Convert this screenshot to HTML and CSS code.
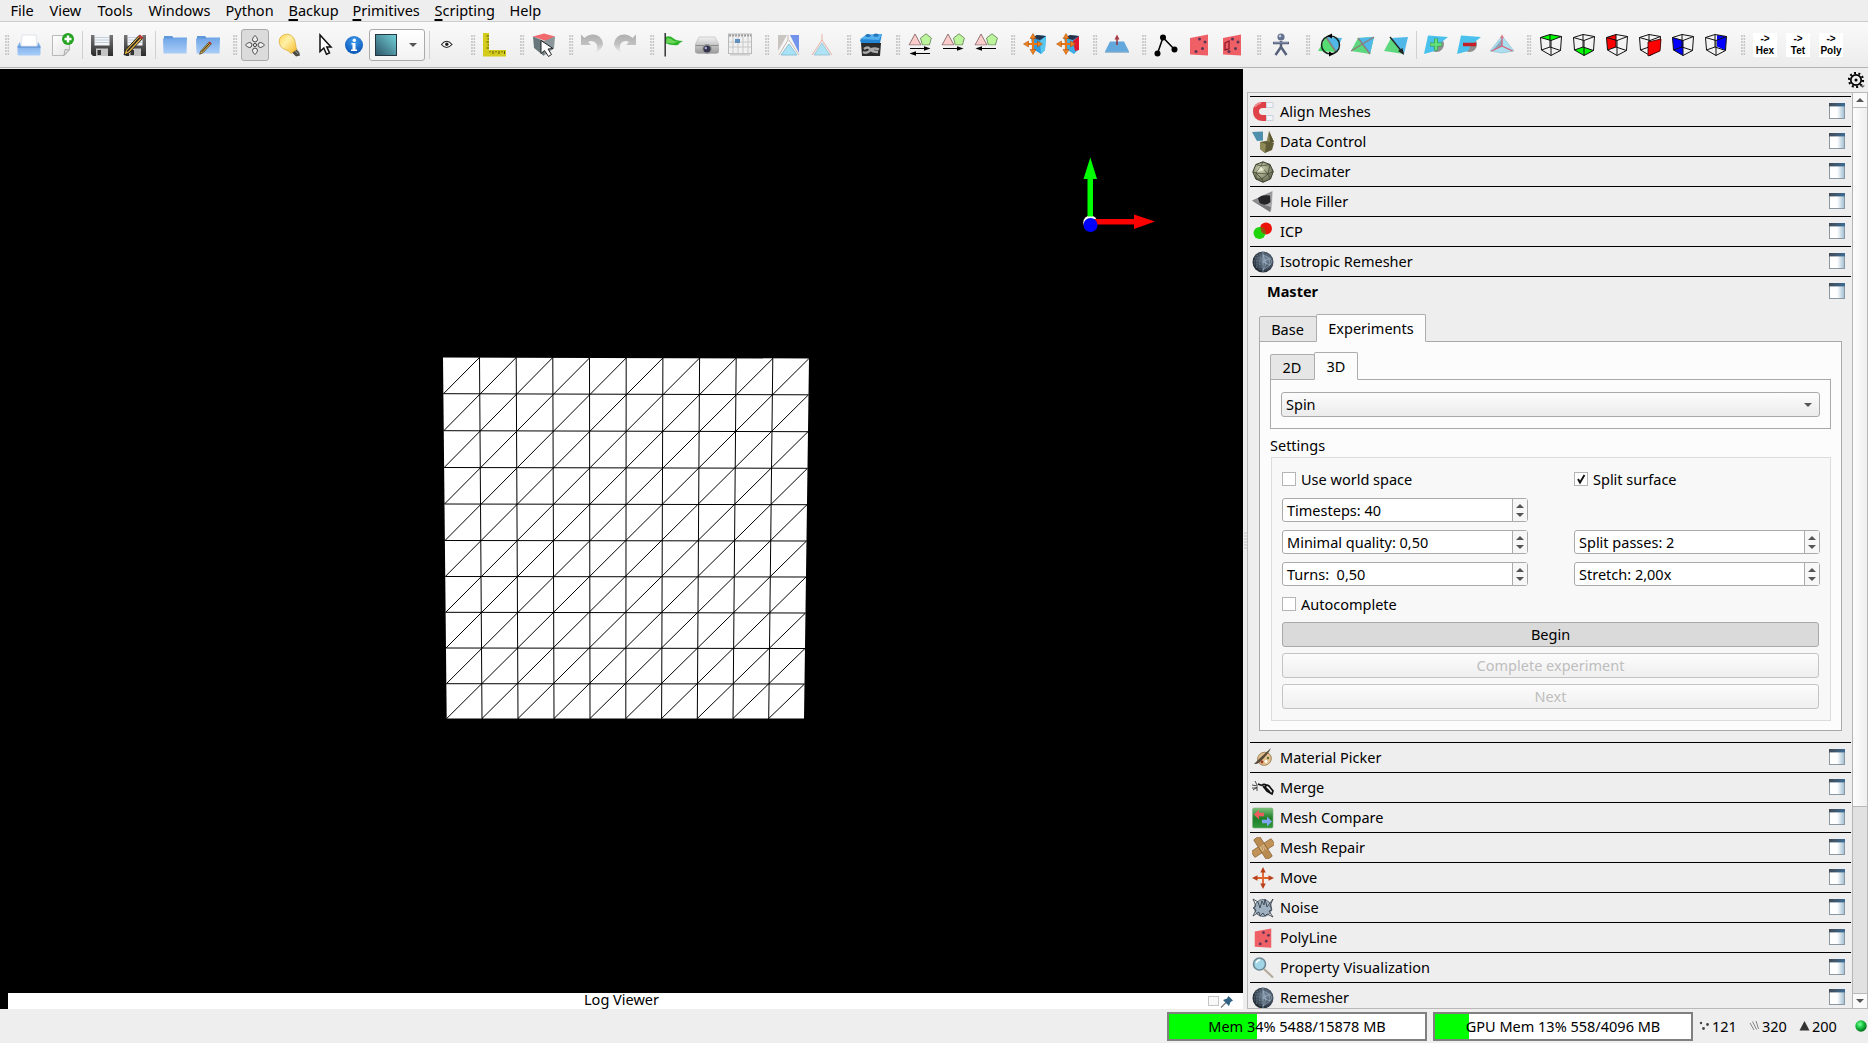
FILE: index.html
```html
<!DOCTYPE html>
<html lang="en">
<head>
<meta charset="utf-8">
<title>Mesh Viewer</title>
<link rel="stylesheet" href="styles.css">
</head>
<body>
<svg class="defs" width="0" height="0" aria-hidden="true">
  <defs>
    <linearGradient id="g-blue" x1="0" y1="0" x2="0" y2="1"><stop offset="0" stop-color="#6fa5e6"/><stop offset="1" stop-color="#a9cdf8"/></linearGradient>
    <linearGradient id="g-paper" x1="0" y1="0" x2="1" y2="1"><stop offset="0" stop-color="#fff"/><stop offset="1" stop-color="#e2e2e2"/></linearGradient>
    <linearGradient id="g-dark" x1="0" y1="0" x2="0" y2="1"><stop offset="0" stop-color="#777"/><stop offset="1" stop-color="#2b2b2b"/></linearGradient>
    <linearGradient id="g-teal" x1="1" y1="0" x2="0" y2="1"><stop offset="0" stop-color="#74d3da"/><stop offset="1" stop-color="#2c5468"/></linearGradient>
    <linearGradient id="g-fade" x1="0" y1="0" x2="0" y2="1"><stop offset="0" stop-color="#b0b0b0"/><stop offset=".5" stop-color="#c0c0c0"/><stop offset="1" stop-color="#f4f4f4"/></linearGradient>
    <linearGradient id="g-bulb" x1="0" y1="0" x2="1" y2="1"><stop offset="0" stop-color="#ffd34e"/><stop offset=".4" stop-color="#fff0a8"/><stop offset="1" stop-color="#f6b821"/></linearGradient>
    <linearGradient id="g-win" x1="0" y1="0" x2="1" y2="0"><stop offset="0" stop-color="#fff"/><stop offset=".5" stop-color="#fff"/><stop offset="1" stop-color="#9fbdd0"/></linearGradient>
    <linearGradient id="g-bar" x1="0" y1="0" x2="1" y2="0"><stop offset="0" stop-color="#414a55"/><stop offset="1" stop-color="#3d6c95"/></linearGradient>
    <radialGradient id="g-ball" cx=".4" cy=".35" r=".65"><stop offset="0" stop-color="#7dff9c"/><stop offset=".5" stop-color="#17c340"/><stop offset="1" stop-color="#04701c"/></radialGradient>
    <radialGradient id="g-globe" cx=".6" cy=".4" r=".65"><stop offset="0" stop-color="#7b90a5"/><stop offset="1" stop-color="#1b232d"/></radialGradient>
    <radialGradient id="g-rock" cx=".4" cy=".35" r=".7"><stop offset="0" stop-color="#d5d9b8"/><stop offset="1" stop-color="#5c6047"/></radialGradient>
    <radialGradient id="g-info" cx=".5" cy=".3" r=".7"><stop offset="0" stop-color="#3f9cf0"/><stop offset="1" stop-color="#0a55b5"/></radialGradient>
    <linearGradient id="g-cam" x1="0" y1="0" x2="0" y2="1"><stop offset="0" stop-color="#f2f2f2"/><stop offset="1" stop-color="#999"/></linearGradient>
    <linearGradient id="g-green" x1="0" y1="0" x2="0" y2="1"><stop offset="0" stop-color="#7cc47a"/><stop offset=".5" stop-color="#1f7d2b"/><stop offset="1" stop-color="#2f9a3a"/></linearGradient>
    <linearGradient id="g-hole" x1="0" y1="0" x2="1" y2="1"><stop offset="0" stop-color="#77777a"/><stop offset="1" stop-color="#b9b9bc"/></linearGradient>
  </defs>
  <symbol id="i-window" viewBox="0 0 16 16"><rect x=".5" y=".5" width="15" height="15" fill="url(#g-win)" stroke="#8b98a2"/><rect width="16" height="3.400" fill="url(#g-bar)"/></symbol>
  <symbol id="i-folder" viewBox="0 0 24 24"><path d="M1 3h8l2 2h12v10H1z" fill="#5f97dd"/><path d="M0 5.500h10l1.500-1H24L23.500 20.500H.5z" fill="url(#g-blue)"/></symbol>
  <symbol id="i-pencil" viewBox="0 0 24 24"><path d="M1 22l1.500-5L16 2.500l3.500 3L6 20z" fill="#e8b640" stroke="#222" stroke-width="1"/><path d="M4 18.500L17.500 4" stroke="#222" stroke-width="1.600"/><path d="M15 3.500L17 1.500l3.500 3-2 2z" fill="#b23a32"/></symbol>
  <symbol id="i-floppy" viewBox="0 0 24 24"><path d="M1 2h22v21H3L1 21z" fill="url(#g-dark)"/><path d="M4.500 1.500h15v11h-15z" fill="#f3f5f8"/><path d="M5 4.500h14M5 7h14M5 9.500h14" stroke="#b8c4d0" stroke-width=".8"/><path d="M6 15.500h12V23H6z" fill="#c4c4c4"/><path d="M7.500 17h3.500v5H7.500z" fill="#333"/></symbol>
  <symbol id="i-shapes" viewBox="0 0 24 12.500"><path d="M1 12L7 1l6 11z" fill="#fbcccc" stroke="#7a5c5c" stroke-width=".8"/><path d="M12.500 5L18 .8 23.400 5l-2 7h-7z" fill="#bdf59c" stroke="#5e7c52" stroke-width=".8"/></symbol>
  <symbol id="i-arr-r" viewBox="0 0 24 6"><path d="M2 3h16" stroke="#000" stroke-width="1.200"/><path d="M16 .8L22.500 3 16 5.200z"/></symbol>
  <symbol id="i-arr-l" viewBox="0 0 24 6"><path d="M22 3H6" stroke="#000" stroke-width="1.200"/><path d="M8 .8L1.500 3 8 5.200z"/></symbol>
  <symbol id="i-poly" viewBox="0 0 24 24"><path d="M3 5L21 1.500v21L3 21.500z" fill="#ef5f66"/><g fill="#5b3553"><circle cx="12.500" cy="6" r="1.500"/><circle cx="18" cy="9" r="1.500"/><circle cx="15.500" cy="15.500" r="1.500"/><circle cx="9" cy="18.500" r="1.500"/></g></symbol>
  <symbol id="i-cross4" viewBox="0 0 24 24"><path d="M12 4v16M4 12h16" stroke-width="2" stroke="#e0622c"/><path fill="#b8401a" d="M12 0l3 6H9zM12 24l3-6H9zM0 12l6-3v6zM24 12l-6-3v6z"/></symbol>
  <symbol id="i-cursor" viewBox="0 0 24 24"><path d="M7 2v16.500l3.800-3.500 2.700 6.200 3-1.300-2.700-6H18z" fill="#fff" stroke="#111" stroke-width="1.500"/></symbol>
  <symbol id="i-wire" viewBox="0 0 24 24"><path d="M1.500 4.500L12 7.500v15L2.500 17zM12 7.500L22.500 3.500 21.500 17.500 12 22.500M1.500 4.500L11 1.500 22.500 3.500M11 1.500v12.500M2.500 17L11 14l10.500 3.500" fill="none" stroke="#111" stroke-width="1"/></symbol>
  <symbol id="i-globe" viewBox="0 0 22 22"><circle cx="11" cy="11" r="10.500" fill="url(#g-globe)"/><path d="M11 .5v21M11 4l6 3 1 7-7 5M11 11l7-4 2 4-2 3M11 11l7 3M11 4l3 9-3 6" fill="none" stroke="#a9bccc" stroke-width=".6"/><path d="M3 7h8M2 10h9M2 13h9M4 16h7M5 4v13M8 3v16" stroke="#8193a5" stroke-width=".7" stroke-dasharray="1 1.500"/></symbol>
  <symbol id="i-orange" viewBox="0 0 24 24"><path d="M10 4v14M3 11h14" stroke="#e87516" stroke-width="2.200"/><path fill="#ee8220" stroke="#a64a08" stroke-width=".5" d="M10 .5l3 5H7zM10 21.500l3-5H7zM.5 11l5-3v6zM19.500 11l-5-3v6z"/></symbol>
</svg>

<div class="app">
  <nav class="menubar">
    <span>File</span><span>View</span><span>Tools</span><span>Windows</span><span>Python</span><span><u>B</u>ackup</span><span><u>P</u>rimitives</span><span><u>S</u>cripting</span><span>Help</span>
  </nav>

  <div class="toolbar">
    <i class="grip"></i>
    <span class="tool"><svg viewBox="0 0 24 24"><path d="M5 2h14l1 11H4z" fill="#fff" stroke="#ccd5e0" stroke-width=".6"/><path d="M3 9L.5 13v8q0 1.500 1.500 1.500h20q1.500 0 1.500-1.500v-8L21 9l-1 5H4z" fill="url(#g-blue)"/><path d="M.5 14h23" stroke="#5488ce"/></svg></span>
    <span class="tool"><svg viewBox="0 0 24 24"><path d="M2.500 2.500h17v14l-5.500 6H2.500z" fill="url(#g-paper)" stroke="#aaa" stroke-width=".8"/><path d="M14 22.500l1-6 4.500.3z" fill="#ddd" stroke="#999" stroke-width=".7"/><circle cx="18" cy="6" r="6" fill="#25a322"/><path d="M18 2.500v7M14.500 6h7" stroke="#fff" stroke-width="2.400"/></svg></span>
    <i class="sep"></i>
    <span class="tool"><svg><use href="#i-floppy"/></svg></span>
    <span class="tool"><svg viewBox="0 0 24 24"><use href="#i-floppy"/><use href="#i-pencil"/></svg></span>
    <i class="sep"></i>
    <span class="tool"><svg><use href="#i-folder"/></svg></span>
    <span class="tool"><svg viewBox="0 0 24 24"><use href="#i-folder"/><use href="#i-pencil" x="3" y="7" width="15" height="16"/></svg></span>
    <i class="grip"></i>
    <span class="tool pressed"><svg viewBox="0 0 24 24"><g fill="#eee" stroke="#333" stroke-width=".9"><path d="M12 2.500c1.500 1.500 2.500 3 2.500 4.200q0 1.800-2.500 2.300-2.500-.5-2.500-2.300C9.500 5.500 10.500 4 12 2.500zM12 21.500c1.500-1.500 2.500-3 2.500-4.200q0-1.800-2.500-2.300-2.500.5-2.500 2.300c0 1.200 1 2.700 2.500 4.200zM2.500 12c1.500-1.500 3-2.500 4.200-2.500Q8.500 9.500 9 12q-.5 2.500-2.300 2.500C5.500 14.500 4 13.500 2.500 12zM21.500 12c-1.500-1.500-3-2.500-4.200-2.500q-1.800 0-2.300 2.500.5 2.500 2.300 2.500c1.200 0 2.700-1 4.200-2.500z"/><circle cx="12" cy="12" r="1.600"/></g></svg></span>
    <span class="tool bulb"><svg viewBox="0 0 24 24"><path d="M16 15l5 3.500 1 4-4 1-5-5z" fill="#4a4a42"/><path d="M16 16l4 5M18 15l3.500 5" stroke="#aaa" stroke-width=".8"/><path d="M2 12C-1 5 5 0 11 1.500 18 4 17 10 18.500 16.500L13 20.500C10 16 4 17 2 12z" fill="url(#g-bulb)" stroke="#d8a32c" stroke-width=".7"/></svg></span>
    <span class="tool pick"><svg><use href="#i-cursor"/></svg></span>
    <span class="tool info"><svg viewBox="0 0 24 24"><circle cx="12" cy="12" r="9" fill="url(#g-info)"/><circle cx="12.300" cy="7.200" r="1.700" fill="#fff"/><path d="M9.500 10h4v6.500h1.500V18H9v-1.500h1.500v-5h-1z" fill="#fff"/></svg></span>
    <span class="mode"><svg class="swatch" viewBox="0 0 22 22"><rect x=".5" y=".5" width="21" height="21" fill="url(#g-teal)" stroke="#24363f"/></svg><i class="down"></i></span>
    <i class="sep narrow"></i>
    <span class="tool"><svg viewBox="0 0 24 24"><path d="M7.500 11.500q5-6.500 10.500 0-5.500 6-10.500 0z" fill="#fff" stroke="#222" stroke-width="1.100"/><circle cx="12.800" cy="11.300" r="1.700" fill="#222"/></svg></span>
    <i class="grip"></i>
    <span class="tool"><svg viewBox="0 0 24 24"><path d="M0 0h6v17h17v6.500H0z" fill="#d4cc1c"/><path d="M3.500 3h2.500M4.500 6H6M3.500 9h2.500M4.500 12H6M3.500 15h2.500M7 18v1.500M10 18v3M13 18v1.500M16 18v3M19 18v1.500M21.500 18v3" stroke="#5b5600" stroke-width="1"/></svg></span>
    <i class="grip"></i>
    <span class="tool"><svg viewBox="0 0 24 24"><path d="M1 3.500L12 .5l11 3-9 4.500z" fill="#f2696d"/><path d="M1 3.500L12 8v15L2 15z" fill="#68777b"/><path d="M12 8l11-4.500-1 12-10 7z" fill="#8a9699"/><path d="M9 7.500v13l3.500-3 4 6 3-2-3.500-5.500 5-.5z" fill="#fff" stroke="#222" stroke-width="1"/></svg></span>
    <i class="grip tight"></i>
    <span class="tool"><svg viewBox="0 0 24 24"><path d="M1 1.500V12h10L8 9q5.500-2.500 8.500 2 2 5-2 9.500Q23 16.500 23 10.500 21 1 12 1.500 7 2 4.500 5z" fill="url(#g-fade)"/></svg></span>
    <span class="tool"><svg viewBox="0 0 24 24"><path d="M23 1.500V12H13l3-3q-5.500-2.500-8.500 2-2 5 2 9.500Q1 16.500 1 10.500 3 1 12 1.500q5 .5 7.500 3.500z" fill="url(#g-fade)"/></svg></span>
    <i class="grip"></i>
    <span class="tool"><svg viewBox="0 0 24 24"><path d="M3 4q5-2 8 1t10 3q-4 2-5 4-6 1-13-2z" fill="#2fb32d"/><path d="M5 5q4 0 7 3l4 .5-5 2-7-1z" fill="#6bd658"/><path d="M3.200 0v23.500" stroke="#333" stroke-width="1.500"/></svg></span>
    <span class="tool"><svg viewBox="0 0 24 24"><path d="M4 4h16l4 8v6q0 2-3 2.500H3q-3-.5-3-2.500v-6z" fill="url(#g-cam)" stroke="#aaa" stroke-width=".5"/><path d="M.5 12.500h23" stroke="#8c8c8c"/><circle cx="12" cy="16" r="5" fill="#999"/><circle cx="12" cy="16" r="3.600" fill="#34344c"/><circle cx="10.800" cy="15" r="1.300" fill="#a7a7d0"/></svg></span>
    <span class="tool"><svg viewBox="0 0 24 24"><rect x=".5" y="1" width="23" height="19.500" fill="#f0f0f0" stroke="#b9b9b9"/><path d="M1 2.500h22" stroke="#999" stroke-width="2" stroke-dasharray="2 1"/><path d="M5 4v16M10 4v16M15 4v16M20 4v16M1 9h22M1 14h22" stroke="#c4c4c4" stroke-width=".9"/><rect x="7" y="6" width="5" height="4" fill="#5f8fc0"/><path d="M2 20.500h20v2H2z" fill="#ccc"/></svg></span>
    <i class="grip"></i>
    <span class="tool"><svg viewBox="0 0 24 24"><path d="M1 2h9L1 18z" fill="#c9c5c1"/><path d="M13 2h9v18z" fill="#7293ec"/><path d="M12 11L20 22H4z" fill="#a8e2f5" stroke="#7ab7d3" stroke-width=".8"/><path d="M11 2v5L2 22M12 7l10 15" fill="none" stroke="#fff" stroke-width="1.800"/><path d="M11 2v5L2 22M12 7l10 15" fill="none" stroke="#a09088" stroke-width=".7"/></svg></span>
    <span class="tool"><svg viewBox="0 0 24 24"><path d="M12 1v6L2 22M12 7l10 15" fill="none" stroke="#e6b1a6" stroke-width="1"/><path d="M12 10l8 12H4z" fill="#aee3f5" stroke="#93bccb" stroke-width=".8"/></svg></span>
    <i class="grip"></i>
    <span class="tool"><svg viewBox="0 0 24 24"><path d="M1 7l6-5 16-1-2 9H2z" fill="#2586d3"/><path d="M1 6l6-4 16-1-3 6z" fill="#52b0ee"/><ellipse cx="9" cy="2.500" rx="2.700" ry="1.600" fill="#2374b8"/><ellipse cx="17" cy="2.200" rx="2.700" ry="1.600" fill="#2374b8"/><path d="M2 10h20l-1 13H3z" fill="#2b2b2b"/><path d="M4 19q4 2 7-1.500t9-1M5 16q4-3 6 0t8 3" fill="none" stroke="#aaa" stroke-width="2.400"/></svg></span>
    <i class="grip"></i>
    <span class="tool"><svg viewBox="0 0 24 24"><use href="#i-shapes" width="24" height="12.500"/><use href="#i-arr-r" y="12.500" width="24" height="6"/><use href="#i-arr-l" y="17.500" width="24" height="6"/></svg></span>
    <span class="tool"><svg viewBox="0 0 24 24"><use href="#i-shapes" width="24" height="12.500"/><use href="#i-arr-r" y="12.500" width="24" height="6"/></svg></span>
    <span class="tool"><svg viewBox="0 0 24 24"><use href="#i-shapes" width="24" height="12.500"/><use href="#i-arr-l" y="12.500" width="24" height="6"/></svg></span>
    <i class="grip"></i>
    <span class="tool"><svg viewBox="0 0 24 24"><path d="M8 5l6-3 9 1-1 14-4 4-8-5z" fill="#2c9be0"/><path d="M17 8l6-5-1 14-4 4z" fill="#58c8ee"/><path d="M9 5l5-3 9 1-6 4z" fill="#26344a"/><use href="#i-orange"/></svg></span>
    <span class="tool"><svg viewBox="0 0 24 24"><path d="M8 5l6-3 9 1-1 14-4 4-8-5z" fill="#3faee6"/><path d="M17 8l6-5v14l-4 1z" fill="#e01830"/><path d="M9 5l5-3 9 1-6 4z" fill="#26344a"/><use href="#i-orange"/></svg></span>
    <i class="grip"></i>
    <span class="tool"><svg viewBox="0 0 24 24"><path d="M5 8.500h14l5 10H0z" fill="#62a8dc"/><path d="M0 18.500h24v1H0z" fill="#4788bd"/><path d="M12 12V4" stroke="#94313b" stroke-width="1.500"/><path d="M12 1.500l2.500 5h-5z" fill="#a83b48"/></svg></span>
    <i class="grip"></i>
    <span class="tool"><svg viewBox="0 0 24 24"><path d="M3.500 20.500L9 4.500l11.500 12" fill="none" stroke="#000" stroke-width="1.500"/><circle cx="3.500" cy="20.500" r="3"/><circle cx="9" cy="4.500" r="3"/><circle cx="20.500" cy="16.500" r="3"/></svg></span>
    <span class="tool"><svg><use href="#i-poly"/></svg></span>
    <span class="tool"><svg viewBox="0 0 24 24"><use href="#i-poly"/><path d="M5 10l4-2v8l-4 1z" fill="none" stroke="#8e1b2b" stroke-width="1.300"/></svg></span>
    <i class="grip"></i>
    <span class="tool"><svg viewBox="0 0 24 24"><circle cx="12" cy="4" r="3.600" fill="#65728f"/><circle cx="11" cy="3" r="1.300" fill="#c4cede"/><path d="M4 10h16M12 8v7M12 14l-5.500 8M12 14l5.500 8" stroke="#56617c" stroke-width="2.500" fill="none"/><path d="M5 9.700h14" stroke="#97a4bf" stroke-width=".8"/></svg></span>
    <i class="grip"></i>
    <span class="tool"><svg viewBox="0 0 24 24"><path d="M0 18L8 4l10 15z" fill="#54dd70"/><path d="M8 4l16 1-6 14z" fill="#4fb8e8"/><path d="M8 4l10 15" stroke="#8d7c78" stroke-width="1.500"/><circle cx="12.500" cy="12" r="9" fill="none" stroke="#12251d" stroke-width="1.500"/><path d="M14 .5l-5 2.500 5 2.500zM11 18.500l5 2.500-5 2.500z"/></svg></span>
    <span class="tool"><svg viewBox="0 0 24 24"><path d="M0 18L7 5l16-1-4 17z" fill="#5ed87e"/><path d="M7 5l16-1-4 17-7-9z" fill="#4fb8e8"/><path d="M7 5l12 16M0 18L23 4" stroke="#8d7c78" stroke-width="1.300"/></svg></span>
    <span class="tool"><svg viewBox="0 0 24 24"><path d="M0 18L7 5l13 16z" fill="#5ed87e"/><path d="M7 5l17-1-4 17z" fill="#4fb8e8"/><path d="M6 4l13 16" stroke="#222" stroke-width="1.400"/><path d="M20 22l-6-4 4.500-3z" fill="#222"/></svg></span>
    <i class="sep"></i>
    <span class="tool"><svg viewBox="0 0 24 24"><circle cx="12.500" cy="11.500" r="7.500" fill="#8f8f8f"/><path d="M4 2.500L24 4 14 12l-3 6L0 21z" fill="#49c1ec"/><path d="M12 5.500v12M6 11.500h12" stroke="#3a9e55" stroke-width="4"/><path d="M12 6v11M6.500 11.500h11" stroke="#63e47b" stroke-width="2.400"/></svg></span>
    <span class="tool"><svg viewBox="0 0 24 24"><circle cx="12.500" cy="11.500" r="7.500" fill="#8f8f8f"/><path d="M4 2.500L24 4 14 12l-3 6L0 21z" fill="#49c1ec"/><path d="M6 11.500h13" stroke="#c31f24" stroke-width="3.500"/></svg></span>
    <span class="tool"><svg viewBox="0 0 24 24"><path d="M12 3L0 18l12 2 12-2z" fill="#a9dff0" stroke="#9ec4d2" stroke-width=".8"/><path d="M12 6L3 17l9-4z" fill="#8aa6b8"/><path d="M12 4v9M12 13L1.500 18M12 13l10.500 5" stroke="#d95a72" stroke-width="1.200"/><path d="M12 1.500l2 3.500h-4z" fill="#d97a86"/></svg></span>
    <i class="grip"></i>
    <span class="tool"><svg viewBox="0 0 24 24"><path d="M1.500 4.500L11 1.500l11.500 2L12 7.500z" fill="#0f0"/><use href="#i-wire"/></svg></span>
    <span class="tool"><svg viewBox="0 0 24 24"><path d="M2.500 17L11 14l10.500 3.500-9.500 5z" fill="#0f0"/><use href="#i-wire"/></svg></span>
    <span class="tool"><svg viewBox="0 0 24 24"><path d="M1.500 4.500L11 1.500V14l-8.500 3z" fill="#f00"/><use href="#i-wire"/></svg></span>
    <span class="tool"><svg viewBox="0 0 24 24"><use href="#i-wire"/><path d="M10 9l13-3-1 12-12 5z" fill="#f00" stroke="#300" stroke-width=".8"/></svg></span>
    <span class="tool"><svg viewBox="0 0 24 24"><path d="M1.500 4.500L12 7.500v15L2.500 17z" fill="#00f"/><use href="#i-wire"/></svg></span>
    <span class="tool"><svg viewBox="0 0 24 24"><path d="M13 2l9.500 1.500-1 14L13 13.500z" fill="#00f"/><use href="#i-wire"/></svg></span>
    <i class="grip"></i>
    <span class="tool"><b class="conv">-&gt;<br>Hex</b></span>
    <span class="tool"><b class="conv">-&gt;<br>Tet</b></span>
    <span class="tool"><b class="conv">-&gt;<br>Poly</b></span>
  </div>

  <div class="main">
    <section class="viewport">
      <svg class="scene" viewBox="0 69 1243 924" width="1243" height="924">
        <path d="M443 357.500L809 358.500 804 718.500 446.700 718.500z" fill="#fff"/>
        <g stroke="#000" stroke-width="1" fill="none">
          <path d="M443.500 393.700L808.500 394.800M443.800 430.700L808 431.700M444.200 467.500L807.500 468.300M444.500 504L807 504.700M445 540.500L806.500 541M445.300 576.500L806 577M445.700 612.300L805.500 613M446 648L805 648.500M446.400 683.700L804.500 684"/>
          <path d="M479.500 357L482 719M516.200 357L518 719M552.800 357L554 719M589.500 357L590 719M626.200 357L625.800 719M662.900 357L661.600 719M699.600 357L697.300 719M736.200 357L733 719M772.800 357L768.700 719"/>
          <path d="M443.500 393.700L479.500 357.500M443.800 430.700L516.200 357.500M444.200 467.500L552.800 357.500M444.500 504L589.500 358M445 540.500L626.200 358M445.300 576.500L662.900 358M445.700 612.300L699.600 358M446 648L736.200 358M446.400 683.700L772.800 358.500M446.700 718.500L809 358.500M482 718.500L808.500 394.800M518 718.500L808 431.700M554 718.500L807.500 468.300M590 718.500L807 504.700M625.800 718.500L806.500 541M661.600 718.500L806 577M697.300 718.500L805.500 613M733 718.500L805 648.500M768.700 718.500L804.500 684"/>
        </g>
        <circle cx="1090.300" cy="222.500" r="7" fill="#fff"/>
        <path d="M1087.500 216.500V179H1083.500L1090.300 157.500 1097 179H1093V216.500z" fill="#0f0"/>
        <path d="M1093 219h41v-4.500l21 7-21 7.500v-4.500h-41z" fill="#f00"/>
        <circle cx="1090.500" cy="225" r="7" fill="#00f"/>
      </svg>
      <div class="log"><span>Log Viewer</span>
        <svg viewBox="0 0 28 16" width="28" height="16"><rect x="2.500" y="3.500" width="10" height="9" fill="#f8f8f8" stroke="#c5c5c5"/><path d="M15 14.500l5-5" stroke="#777" stroke-width="1.200"/><path d="M17 7l6 6 1.500-4L27 7.500 22.500 3 21 5.500z" fill="#2f6185"/></svg>
      </div>
    </section>

    <i class="splitter"></i>

    <aside class="side">
      <div class="side-head"><svg viewBox="0 0 18 18" width="18" height="18"><circle cx="8" cy="8" r="7" fill="none" stroke="#000" stroke-width="2.200" stroke-dasharray="2 2.400"/><circle cx="8" cy="8" r="5.200" fill="none" stroke="#000" stroke-width="1.700"/><circle cx="8" cy="8" r="1.500"/><path d="M12 13.500h5l-2.500 2.200z" fill="#555"/></svg></div>
      <div class="side-body">
        <div class="panels">
          <div class="row"><svg class="ico" viewBox="0 0 22 22"><path d="M14 4H10.500Q4 4.500 4 10.500T10.500 17H14" fill="none" stroke="#de4148" stroke-width="6"/><path d="M3 6q2-3.500 6-4" fill="none" stroke="#f28c8f" stroke-width="1.500"/><path d="M14.500 1.500h6.500v5h-6.500zM14.500 14.500h6.500v5h-6.500z" fill="#f1f4f8" stroke="#c3cbd5" stroke-width=".8"/></svg><span>Align Meshes</span><svg class="win"><use href="#i-window"/></svg></div>
          <div class="row"><svg class="ico" viewBox="0 0 22 22"><path d="M0 1l11-.5v9L5 10z" fill="#4e8fad"/><path d="M17 0l5 11-8 2z" fill="#878251"/><path d="M17 0l5 11-4 1z" fill="#59562f"/><path d="M8 11l6-1 8 2-2 7-7 3-5-4z" fill="#5f5b34"/><path d="M8 11l6 2-1 9-5-4z" fill="#8f8a58"/></svg><span>Data Control</span><svg class="win"><use href="#i-window"/></svg></div>
          <div class="row"><svg class="ico" viewBox="0 0 22 22"><path d="M11 .8l7 2.700 3.300 7-2.800 7.500L11 21.300 3.800 18 .8 11l3-7.500z" fill="url(#g-rock)" stroke="#3c3f2c"/><path d="M11 .8L9 5l9-1.500L16 13 9 5 4 12l12 1-6 5-6-6-3-1M9 5L4 3.500M16 13l5-2.500M16 13l2.500 5M10 18l1 3M10 18l-6 0M4 12v6" fill="none" stroke="#3c3f2c" stroke-width=".7"/><path d="M9 5l-4.500 6.500 8-3z" fill="#f1f3dc" opacity=".7"/></svg><span>Decimater</span><svg class="win"><use href="#i-window"/></svg></div>
          <div class="row"><svg class="ico" viewBox="0 0 22 22"><path d="M0 9.500L20.500 0 20 13l-1 8z" fill="url(#g-hole)"/><path d="M0 9.500L18 21l1-5-11-3z" fill="#77777a"/><path d="M6 7.500Q9 3 18 4.500L18.500 11q-5 5-11 1z" fill="#252427"/></svg><span>Hole Filler</span><svg class="win"><use href="#i-window"/></svg></div>
          <div class="row"><svg class="ico" viewBox="0 0 22 22"><circle cx="14" cy="7.500" r="6" fill="#ea1409"/><circle cx="7.500" cy="12" r="6" fill="#1fd40d"/><path d="M8.500 6q6 0 5 7 -5 0-5-7z" fill="#98500d"/></svg><span>ICP</span><svg class="win"><use href="#i-window"/></svg></div>
          <div class="row"><svg class="ico"><use href="#i-globe"/></svg><span>Isotropic Remesher</span><svg class="win"><use href="#i-window"/></svg></div>

          <div class="master">
            <div class="master-head"><span>Master</span><svg class="win"><use href="#i-window"/></svg></div>
            <div class="tabs outer"><span class="tab base">Base</span><span class="tab on exp">Experiments</span></div>
            <div class="pane outer-pane">
              <div class="tabs"><span class="tab t2">2D</span><span class="tab on t3">3D</span></div>
              <div class="pane inner-pane"><div class="combo"><span>Spin</span><i class="down"></i></div></div>
              <div class="group-title">Settings</div>
              <div class="group">
                <div class="cols">
                  <label class="check"><i></i><span>Use world space</span></label>
                  <label class="check"><i><svg viewBox="0 0 12 12" width="12" height="12"><path d="M3 6l2 3.500L9.500 2" fill="none" stroke="#111" stroke-width="1.900"/></svg></i><span>Split surface</span></label>
                  <div class="spin"><span>Timesteps: 40</span><b><i class="up"></i><i class="down"></i></b></div>
                  <div></div>
                  <div class="spin"><span>Minimal quality: 0,50</span><b><i class="up"></i><i class="down"></i></b></div>
                  <div class="spin"><span>Split passes: 2</span><b><i class="up"></i><i class="down"></i></b></div>
                  <div class="spin"><span>Turns:&nbsp; 0,50</span><b><i class="up"></i><i class="down"></i></b></div>
                  <div class="spin"><span>Stretch: 2,00x</span><b><i class="up"></i><i class="down"></i></b></div>
                </div>
                <label class="check auto"><i></i><span>Autocomplete</span></label>
                <div class="btn down-state">Begin</div>
                <div class="btn off">Complete experiment</div>
                <div class="btn off">Next</div>
              </div>
            </div>
          </div>

          <div class="row"><svg class="ico" viewBox="0 0 22 22"><ellipse cx="12.500" cy="12" rx="7" ry="6.500" fill="#e2c18f" stroke="#8c6c3e" stroke-width=".7" transform="rotate(-25 12 12)"/><circle cx="10" cy="15" r="1.400" fill="#a03a25"/><circle cx="14" cy="14.500" r="1.400" fill="#fff"/><circle cx="16" cy="11" r="1.200" fill="#5c6c30"/><path d="M2 17q3-3 6-6L19 1q-2 5-9 12-4 4-6 4z" fill="#594a38"/></svg><span>Material Picker</span><svg class="win"><use href="#i-window"/></svg></div>
          <div class="row"><svg class="ico" viewBox="0 0 22 22"><path d="M0 8l6 1M3 4l2 4M1 13l4-3M0 11h5M5 14V10" stroke="#333" stroke-width=".9"/><path d="M6 7l4 1.500M10 8.500q2-2.500 5 .5" fill="none" stroke="#111" stroke-width="1.800"/><path d="M11 9l4 5 5 3 1-3-4-5q-3-2-4 1l5 5" fill="none" stroke="#111" stroke-width="1.700"/></svg><span>Merge</span><svg class="win"><use href="#i-window"/></svg></div>
          <div class="row"><svg class="ico" viewBox="0 0 22 22"><rect x=".5" y="1" width="20.500" height="20" rx="1.500" fill="url(#g-green)" stroke="#7fae7f" stroke-width=".6"/><path d="M2 7.500l5-5v3.300h5v3.400H7v3.300z" fill="#ee5d5d"/><path d="M20 14.500l-5-5v3.300h-5v3.400h5v3.300z" fill="#7da6ef"/></svg><span>Mesh Compare</span><svg class="win"><use href="#i-window"/></svg></div>
          <div class="row"><svg class="ico" viewBox="0 0 22 22"><g stroke="#8a6336" stroke-width=".7"><rect x="-1" y="7.500" width="24" height="7" rx="1" fill="#c29358" transform="rotate(-33 11 11)"/><rect x="-1" y="7.500" width="24" height="7" rx="1" fill="#b98b51" transform="rotate(57 11 11)"/></g><rect x="8.500" y="8.500" width="5" height="5" fill="#dcb985" transform="rotate(-33 11 11)"/><path d="M9.500 10h3M10 12h3" stroke="#8a6336" stroke-dasharray="1 1"/></svg><span>Mesh Repair</span><svg class="win"><use href="#i-window"/></svg></div>
          <div class="row"><svg class="ico"><use href="#i-cross4"/></svg><span>Move</span><svg class="win"><use href="#i-window"/></svg></div>
          <div class="row"><svg class="ico" viewBox="0 0 22 22"><circle cx="11" cy="11" r="8.500" fill="#9fb1c1" stroke="#4c5863" stroke-width=".8"/><path d="M1 2l5 3 2 6 2-7 2 4 1-6 2 8 6-8-3 7 2 4-3 1 4 6-6-3-2 2-2-3-3 3-1-4-6 4 3-6-3-2 3-2z" fill="none" stroke="#3a444e" stroke-width=".9"/></svg><span>Noise</span><svg class="win"><use href="#i-window"/></svg></div>
          <div class="row"><svg class="ico"><use href="#i-poly"/></svg><span>PolyLine</span><svg class="win"><use href="#i-window"/></svg></div>
          <div class="row wide"><svg class="ico" viewBox="0 0 22 22"><path d="M12 12l9 8.500" stroke="#b5aa9c" stroke-width="2.200"/><circle cx="7.500" cy="7" r="6" fill="#9fd5e6" stroke="#6d8894" stroke-width="1.600"/><path d="M4 6q1.500-3 4-3" stroke="#fff" stroke-width="1.300" fill="none"/></svg><span>Property Visualization</span><svg class="win"><use href="#i-window"/></svg></div>
          <div class="row"><svg class="ico"><use href="#i-globe"/></svg><span>Remesher</span><svg class="win"><use href="#i-window"/></svg></div>
        </div>
        <div class="scroll"><b><i class="up"></i></b><div class="thumb"></div><div class="trough"></div><b><i class="down"></i></b></div>
      </div>
    </aside>
  </div>

  <footer class="status">
    <div class="meter mem"><span>Mem 34% 5488/15878 MB</span></div>
    <div class="meter gpu"><span>GPU Mem 13% 558/4096 MB</span></div>
    <span class="stat s1"><svg viewBox="0 0 11 12" width="11" height="12"><g fill="#444"><circle cx="2" cy="3" r="1.200"/><circle cx="8.500" cy="4.500" r="1.400"/><circle cx="4.500" cy="8.500" r="1.400"/></g></svg>121</span>
    <span class="stat s2"><svg viewBox="0 0 11 12" width="11" height="12"><path d="M1 3l4 7M3.500 1.500l4 8M7 1l2.500 8" stroke="#777" stroke-width=".9"/></svg>320</span>
    <span class="stat s3"><svg viewBox="0 0 11 12" width="11" height="12"><path d="M5.500 1L10.500 10.500H.5z" fill="#333"/></svg>200</span>
    <svg class="led" viewBox="0 0 12 12" width="12" height="12"><circle cx="6" cy="6" r="5.700" fill="url(#g-ball)"/></svg>
  </footer>
</div>
</body>
</html>
```

FILE: styles.css
```css
* { box-sizing: border-box; }
html, body { margin: 0; height: 100%; overflow: hidden; }
body {
  background: #eee;
  color: #000;
  font: 14.5px/20px "Noto Sans", "Open Sans", sans-serif;
  white-space: nowrap;
}
i { font-style: normal; }
svg { display: block; flex: none; }
.defs { position: absolute; }
.app { display: flex; flex-direction: column; width: 1868px; height: 1043px; }

/* menu */
.menubar {
  display: grid;
  grid-template-columns: 39px 48px 51px 77px 63px 64px 82px 75px 60px;
  height: 22px;
  padding-left: 10.5px;
  border-bottom: 1px solid #cdcdcd;
}
.menubar u { text-underline-offset: 3px; text-decoration-thickness: 1.5px; text-decoration-skip-ink: none; }

/* toolbar */
.toolbar {
  display: flex;
  align-items: center;
  height: 46px;
  padding-top: 1px;
  border-bottom: 1px solid #b4b4b4;
  background: linear-gradient(#fafafa, #ececec);
}
.tool { flex: none; width: 33px; padding: 0 5px 0 4px; }
.tool svg { width: 24px; height: 24px; }
.grip { flex: none; width: 16px; height: 20px; padding: 0 3px 0 8px; }
.grip:first-child { width: 13px; padding-left: 5px; }
.grip.tight { width: 15px; padding-right: 2px; }
.grip::before {
  content: "";
  display: block;
  height: 20px;
  background: radial-gradient(circle at 1px 1px, #c2c2c2 .7px, transparent 1px) 0 0 / 2.500px 3px;
}
.sep { flex: none; width: 7px; height: 28px; padding-left: 3px; }
.sep::before { content: ""; display: block; width: 1px; height: 28px; background: #d0d0d0; }
.sep.narrow { width: 5px; padding-left: 4px; }
.pressed {
  width: 28px;
  height: 32px;
  padding: 3px 1px;
  border: 1px solid #a9a9a9;
  border-radius: 3px;
  background: #dbdbdb;
}
.bulb { width: 38px; padding: 0 5px 0 9px; }
.pick { padding: 0 3px 0 6px; width: 33px; }
.info { width: 29px; padding: 0 3px 0 2px; }
.mode {
  display: flex;
  flex: none;
  align-items: center;
  justify-content: space-between;
  width: 56px;
  height: 32px;
  padding: 0 7px 0 5px;
  border: 1px solid #aaa;
  border-radius: 3px;
  background: linear-gradient(#fff, #f2f2f2);
}
.swatch { width: 22px; height: 22px; }
.up, .down { width: 0; height: 0; border: 4px solid transparent; }
.down { border-top-color: #555; border-bottom: 0; }
.up { border-bottom-color: #555; border-top: 0; }
.conv {
  display: block;
  width: 24px;
  height: 24px;
  background: #fff;
  font: bold 10px/12px "Liberation Sans", Arial, sans-serif;
  text-align: center;
}

/* work area */
.main { display: flex; flex: none; height: 941px; padding-top: 1px; }
.viewport { display: flex; flex-direction: column; width: 1243px; height: 940px; background: #000; }
.log {
  display: flex;
  align-items: flex-start;
  height: 16px;
  margin: 0 0 0 8px;
  padding-left: 29px;
  background: #fff;
  line-height: 12px;
}
.log span { flex: 1; text-align: center; }
.log svg { margin-right: 9px; }
.splitter {
  width: 4px;
  padding: 463px 0 0 1px;
}
.splitter::before {
  content: "";
  display: block;
  height: 18px;
  background: radial-gradient(circle at 1px 1px, #d0d0d0 .6px, transparent 1px) 0 0 / 2px 3px;
}
.side { width: 621px; margin-top: -1px; }
.side-head { display: flex; justify-content: flex-end; height: 24px; padding: 4px 2px 0 0; }
.side-body {
  display: flex;
  height: 917px;
  border: 1px solid #b9b9b9;
}
.panels { width: 605px; padding: 3px 2px 0 2px; overflow: hidden; }
.row {
  display: flex;
  align-items: center;
  height: 30px;
  border-top: 1px solid #000;
  padding: 0 6px 0 2px;
}
.row span { flex: 1; padding: 0 0 2px 6px; }
.row.wide span { letter-spacing: .08px; }
.ico { width: 22px; height: 22px; }
.win { width: 16px; height: 16px; }
.row .win, .master-head .win { margin-top: -1px; }

.scroll {
  display: flex;
  flex-direction: column;
  width: 15px;
  margin-left: -1px;
  border-left: 1px solid #b5b5b5;
}
.scroll b {
  display: flex;
  align-items: center;
  justify-content: center;
  height: 14px;
  background: #fafafa;
}
.thumb {
  height: 700px;
  border: solid #b9b9b9;
  border-width: 1px 0;
  background: linear-gradient(90deg, #fdfdfd, #efefef);
}
.trough { flex: 1; border-bottom: 1px solid #b9b9b9; background: #e1e1e1; }

/* master panel */
.master { height: 466px; border-top: 1px solid #000; }
.master-head {
  display: flex;
  align-items: center;
  justify-content: space-between;
  height: 29px;
  padding: 0 6px 0 17px;
  font-weight: bold;
}
.master-head span { padding-bottom: 2px; }
.tabs { display: flex; align-items: flex-end; height: 28px; margin-bottom: -1px; }
.tab {
  height: 26px;
  border: 1px solid #adadad;
  border-radius: 2px 2px 0 0;
  background: #e6e6e6;
  line-height: 24px;
  text-align: center;
}
.tab.on {
  position: relative;
  height: 28px;
  border-bottom-color: #fcfcfc;
  margin-left: -1px;
  background: #fcfcfc;
  line-height: 26px;
}
.outer { margin: 8px 0 -1px 9px; }
.base { width: 58px; padding-right: 1px; }
.exp { width: 110px; }
.t2 { width: 45px; padding-right: 1px; }
.t3 { width: 44px; }
.pane { border: 1px solid #a9a9a9; background: #fcfcfc; }
.outer-pane { width: 583px; height: 390px; margin-left: 9px; padding: 10px 10px 0; }
.inner-pane { height: 50px; padding: 12px 10px; }
.combo {
  display: flex;
  align-items: center;
  justify-content: space-between;
  height: 25px;
  padding: 0 7px 0 4px;
  border: 1px solid #a9a9a9;
  border-radius: 3px;
  background: linear-gradient(#fcfcfc, #ebebeb);
}
.combo span { padding-bottom: 1px; }
.group-title { height: 28px; line-height: 33px; }
.group {
  height: 264px;
  margin-left: 1px;
  padding: 14px 11px 0 10px;
  border: 1px solid #dcdcdc;
  background: #f8f8f8;
}
.cols {
  display: grid;
  grid-template-columns: 246px 246px;
  grid-template-rows: 18px 24px 24px 24px;
  gap: 8px 46px;
}
.check { display: flex; align-items: center; height: 14px; }
.check i { width: 14px; height: 14px; border: 1px solid #b5b5b5; background: #fff; }
.check span { padding-left: 5px; }
.check.auto { height: 16px; margin: 10px 0 10px; }
.spin {
  display: flex;
  height: 24px;
  border: 1px solid #aaa;
  border-radius: 3px;
  background: #fff;
  line-height: 22px;
}
.spin span { flex: 1; padding-left: 4px; }
.spin b {
  display: flex;
  flex-direction: column;
  align-items: center;
  justify-content: center;
  gap: 5px;
  width: 15px;
  padding-right: 1px;
  border-left: 1px solid #aaa;
  background: #f7f7f7;
}
.btn {
  height: 25px;
  margin-bottom: 6px;
  border: 1px solid #c4c4c4;
  border-radius: 3px;
  background: linear-gradient(#fcfcfc, #efefef);
  line-height: 23px;
  text-align: center;
}
.off { color: #bebebe; }
.down-state { border-color: #a9a9a9; background: #dadada; }

/* status bar */
.status { display: flex; align-items: center; height: 34px; padding-left: 1167px; }
.meter {
  width: 260px;
  height: 29px;
  margin-right: 6px;
  border: 2px solid #808080;
  line-height: 24px;
  text-align: center;
}
.mem { background: linear-gradient(90deg, #0f0 88px, #fff 88px); }
.gpu { background: linear-gradient(90deg, #0f0 34px, #fff 34px); }
.stat { display: flex; align-items: center; gap: 2px; width: 50px; padding-bottom: 1px; }
.s3 { width: 56px; }
```
